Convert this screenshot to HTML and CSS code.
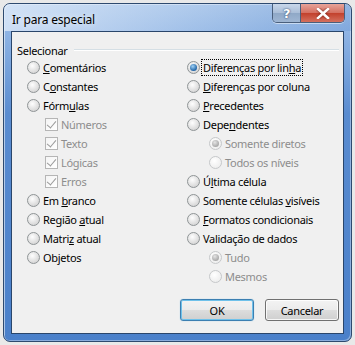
FILE: index.html
```html
<!DOCTYPE html>
<html lang="pt">
<head>
  <meta charset="UTF-8" />
  <title>Ir para especial</title>
  <link rel="stylesheet" href="styles.css">
</head>
<body>
  <div class="window">
    <div class="titlebar">
      <span class="title">Ir para especial</span>
      <div class="caption-buttons">
        <span class="cap-btn help">?</span>
        <span class="cap-btn close">
          <svg width="14" height="11" viewBox="0 0 14 11"><path d="M2 1 L12 10 M12 1 L2 10" stroke="#fff" stroke-width="2.6" stroke-linecap="square"/></svg>
        </span>
      </div>
    </div>

    <div class="client">
      <div class="group">
        <div class="group-head"><span>Selecionar</span><span class="rule"></span></div>
        <div class="columns">
          <div class="col">
            <div class="row"><span class="radio"></span><span class="label"><u>C</u>omentários</span></div>
            <div class="row"><span class="radio"></span><span class="label">C<u>o</u>nstantes</span></div>
            <div class="row"><span class="radio"></span><span class="label">Fórm<u>u</u>las</span></div>
            <div class="row sub off"><span class="check"></span><span class="label">Números</span></div>
            <div class="row sub off"><span class="check"></span><span class="label">Texto</span></div>
            <div class="row sub off"><span class="check"></span><span class="label">Lógicas</span></div>
            <div class="row sub off"><span class="check"></span><span class="label">Erros</span></div>
            <div class="row"><span class="radio"></span><span class="label">Em <u>b</u>ranco</span></div>
            <div class="row"><span class="radio"></span><span class="label">Região <u>a</u>tual</span></div>
            <div class="row"><span class="radio"></span><span class="label">Matri<u>z</u> atual</span></div>
            <div class="row"><span class="radio"></span><span class="label">Ob<u>j</u>etos</span></div>
          </div>
          <div class="col">
            <div class="row"><span class="radio on"></span><span class="label focus">Diferenças por lin<u>h</u>a</span></div>
            <div class="row"><span class="radio"></span><span class="label"><u>D</u>iferenças por coluna</span></div>
            <div class="row"><span class="radio"></span><span class="label"><u>P</u>recedentes</span></div>
            <div class="row"><span class="radio"></span><span class="label">Depe<u>n</u>dentes</span></div>
            <div class="row sub-r off"><span class="radio on"></span><span class="label">Somente diretos</span></div>
            <div class="row sub-r off"><span class="radio"></span><span class="label">Todos os níveis</span></div>
            <div class="row"><span class="radio"></span><span class="label">Ú<u>l</u>tima célula</span></div>
            <div class="row"><span class="radio"></span><span class="label">Somente células <u>v</u>isíveis</span></div>
            <div class="row"><span class="radio"></span><span class="label"><u>F</u>ormatos condicionais</span></div>
            <div class="row"><span class="radio"></span><span class="label">Validação de dados</span></div>
            <div class="row sub-r off"><span class="radio on"></span><span class="label">Tudo</span></div>
            <div class="row sub-r off"><span class="radio"></span><span class="label">Mesmos</span></div>
          </div>
        </div>
      </div>

      <div class="actions">
        <button class="btn default">OK</button>
        <button class="btn">Cancelar</button>
      </div>
    </div>
  </div>
</body>
</html>
```

FILE: styles.css
```css
body {
  margin: 0;
  width: 355px;
  height: 345px;
  overflow: hidden;
  font-family: 'Noto Sans', 'Open Sans', sans-serif;
  font-size: 11px;
  letter-spacing: -0.3px;
  color: #000;
  background-color: #e9e9e9;
  background-image: linear-gradient(to right, transparent 69px, #c9c9c9 69px, #c9c9c9 70px, transparent 70px);
  background-size: 64px 100%;
}
.window {
  box-sizing: border-box;
  margin: 3px;
  width: 349px;
  height: 339px;
  border: 1px solid #2e4a6f;
  border-radius: 7px;
  background: linear-gradient(to bottom, #a9c6ea 0px, #8fb4e4 28px, #5a8cd0 110px, #4a80ca 339px);
  box-shadow: inset 1px 1px 0 rgba(255,255,255,0.55), inset -1px -1px 0 rgba(255,255,255,0.35);
  display: flex;
  flex-direction: column;
}
.titlebar {
  height: 27px;
  display: flex;
  align-items: flex-start;
  justify-content: space-between;
  background: linear-gradient(to right, rgba(225,236,250,0.75), rgba(190,212,240,0.35) 55%, rgba(80,130,200,0.25));
  border-radius: 6px 6px 0 0;
}
.title {
  padding: 7px 0 0 8px;
  font-size: 12px;
  letter-spacing: -0.2px;
  color: #000;
  text-shadow: 0 0 6px rgba(255,255,255,0.9);
}
.caption-buttons {
  display: flex;
  margin-right: 6px;
  border: 1px solid #4a5f7c;
  border-top: none;
  border-radius: 0 0 5px 5px;
  overflow: hidden;
  box-shadow: 0 1px 0 rgba(255,255,255,0.5);
}
.cap-btn {
  height: 18px;
  display: flex;
  align-items: center;
  justify-content: center;
}
.help {
  width: 27px;
  font-family: 'DejaVu Sans', sans-serif;
  font-weight: bold;
  font-size: 13px;
  color: #fff;
  text-shadow: 0 0 2px #3b5578, 0 0 1px #3b5578;
  background: linear-gradient(to bottom, #c8d7ea, #a9bdd7 50%, #8fa8c7 51%, #9fb6d3);
  border-right: 1px solid #4a5f7c;
}
.close {
  width: 43px;
  background: linear-gradient(to bottom, #e7a499, #d46f60 50%, #c2402c 51%, #d4705e);
}
.close svg path {
  filter: drop-shadow(0 0 1px #6b1a10);
}
.client {
  flex: 1;
  margin: 0 7px 7px 7px;
  border: 1px solid #2a466b;
  background: #f0f0f0;
  display: flex;
  flex-direction: column;
}
.group {
  padding: 10px 4px 0 4px;
}
.group-head {
  height: 16px;
  display: flex;
  align-items: center;
  padding-left: 1px;
}
.rule {
  flex: 1;
  margin-left: 6px;
  border-top: 1px solid #d5dfe5;
  border-bottom: 1px solid #fff;
}
.columns {
  display: grid;
  grid-template-columns: 160px 1fr;
  padding-left: 11px;
  margin-top: 0;
}
.row {
  height: 19px;
  display: flex;
  align-items: center;
  white-space: nowrap;
}
.label u {
  text-decoration: underline;
}
.radio {
  box-sizing: border-box;
  width: 13px;
  height: 13px;
  margin-right: 3px;
  border-radius: 50%;
  border: 1px solid #8f9496;
  background: radial-gradient(circle at 40% 35%, #fefefe, #d9d9d9 70%, #c8c8c8);
  position: relative;
  flex-shrink: 0;
}
.radio.on::after {
  content: "";
  position: absolute;
  left: 2px;
  top: 2px;
  width: 7px;
  height: 7px;
  border-radius: 50%;
  background: radial-gradient(circle at 40% 35%, #9fd2f6, #1f63a6 70%);
}
.off {
  color: #8d8d8d;
}
.off .radio {
  border-color: #c6c8ca;
  background: radial-gradient(circle at 40% 35%, #fff, #efefef 70%);
}
.off .radio.on::after {
  background: radial-gradient(circle at 40% 35%, #e4e4e4, #a9a9a9 70%);
}
.sub {
  padding-left: 18px;
}
.sub-r {
  padding-left: 22px;
}
.check {
  box-sizing: border-box;
  width: 13px;
  height: 13px;
  margin-right: 3px;
  border: 1px solid #b5b5b5;
  background: linear-gradient(135deg, #f4f4f4, #fff);
  position: relative;
}
.check::after {
  content: "";
  position: absolute;
  left: 3px;
  top: 0px;
  width: 4px;
  height: 8px;
  border: solid #9a9a9a;
  border-width: 0 1.5px 1.5px 0;
  transform: rotate(40deg);
}
.focus {
  outline: 1px dotted #000;
  padding: 0 1px;
  margin-left: -1px;
}
.actions {
  margin-top: auto;
  display: flex;
  justify-content: flex-end;
  gap: 11px;
  padding: 0 4px 12px 0;
}
.btn {
  box-sizing: border-box;
  width: 74px;
  height: 22px;
  font-family: inherit;
  font-size: 11px;
  letter-spacing: inherit;
  color: #000;
  border: 1px solid #707070;
  border-radius: 3px;
  background: linear-gradient(to bottom, #f3f3f3, #ebebeb 50%, #dddddd 51%, #cfcfcf);
  box-shadow: inset 0 0 0 1px rgba(255,255,255,0.8);
  padding: 0;
}
.btn.default {
  border-color: #3c7fb1;
  box-shadow: inset 0 0 0 1px #6fc1ea, 0 0 1px #7ec3ea;
}
```
